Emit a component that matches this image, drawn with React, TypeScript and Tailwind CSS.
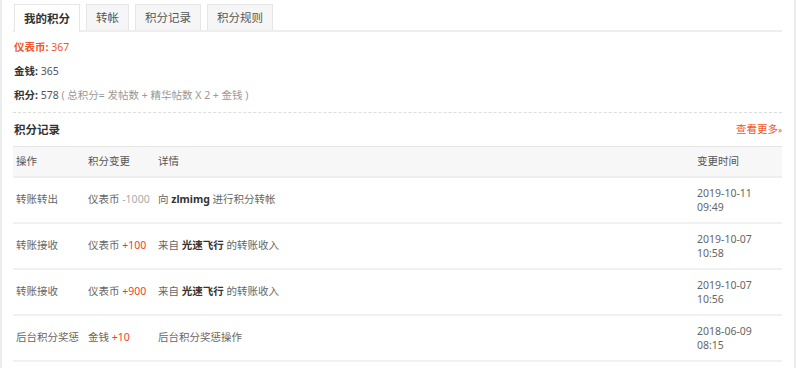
import React from "react";

type Row = {
  action: string;
  unit: string;
  amount: string;
  positive: boolean;
  detail: React.ReactNode;
  date: string;
  time: string;
};

const rows: Row[] = [
  {
    action: "转账转出",
    unit: "仪表币",
    amount: "-1000",
    positive: false,
    detail: (
      <>
        向 <b className="font-bold text-[#333]">zlmimg</b> 进行积分转帐
      </>
    ),
    date: "2019-10-11",
    time: "09:49",
  },
  {
    action: "转账接收",
    unit: "仪表币",
    amount: "+100",
    positive: true,
    detail: (
      <>
        来自 <b className="font-bold text-[#333]">光速飞行</b> 的转账收入
      </>
    ),
    date: "2019-10-07",
    time: "10:58",
  },
  {
    action: "转账接收",
    unit: "仪表币",
    amount: "+900",
    positive: true,
    detail: (
      <>
        来自 <b className="font-bold text-[#333]">光速飞行</b> 的转账收入
      </>
    ),
    date: "2019-10-07",
    time: "10:56",
  },
  {
    action: "后台积分奖惩",
    unit: "金钱",
    amount: "+10",
    positive: true,
    detail: "后台积分奖惩操作",
    date: "2018-06-09",
    time: "08:15",
  },
];

const tabs = ["我的积分", "转帐", "积分记录", "积分规则"];

export default function App() {
  return (
    <div className="h-[368px] w-[798px] overflow-hidden bg-white font-['Noto_Sans','Noto_Sans_CJK_SC',sans-serif] text-[10.5px] text-[#666]">
      <div className="h-full w-[796px] border-l-2 border-r-2 border-[#ececec] pl-[11px] pr-[12px]">
        {/* tabs */}
        <div className="flex h-[32px] items-end gap-[6px] border-b-2 border-[#eeeeee] pl-[1px] text-[11.5px]">
          {tabs.map((t, i) =>
            i === 0 ? (
              <div
                key={t}
                className="-mb-[2px] flex h-[28px] items-center whitespace-nowrap border border-b-0 border-[#e6e6e6] bg-white px-[9px] font-bold text-[#333]"
              >
                {t}
              </div>
            ) : (
              <div
                key={t}
                className="flex h-[26px] items-center whitespace-nowrap border border-b-0 border-[#e6e6e6] bg-[#f6f6f6] px-[9px] text-[#555]"
              >
                {t}
              </div>
            )
          )}
        </div>

        {/* summary */}
        <div className="border-b border-dashed border-[#dddddd] pb-[5px] pl-[1px] pt-[3px] leading-[24px]">
          <div className="text-[#f0562b]">
            <b className="font-bold">仪表币:</b> 367
          </div>
          <div className="text-[#555]">
            <b className="font-bold text-[#333]">金钱:</b> 365
          </div>
          <div className="text-[#555]">
            <b className="font-bold text-[#333]">积分:</b> 578{" "}
            <span className="text-[#999]">( 总积分= 发帖数 + 精华帖数 X 2 + 金钱 )</span>
          </div>
        </div>

        {/* title */}
        <div className="flex h-[33px] items-center justify-between pl-[1px]">
          <span className="text-[11.5px] font-bold text-[#333]">积分记录</span>
          <span className="text-[#f0562b]">
            查看更多<span className="text-[8px]">»</span>
          </span>
        </div>

        {/* table */}
        <div className="whitespace-nowrap border-t border-[#e6e6e6]">
          <div className="flex h-[31px] items-center border-b-2 border-[#eeeeee] bg-[#f7f7f7] text-[#555]">
            <div className="w-[72px] shrink-0 pl-[3px]">操作</div>
            <div className="w-[70px] shrink-0 pl-[3px]">积分变更</div>
            <div className="min-w-0 flex-1 pl-[3px]">详情</div>
            <div className="w-[88px] shrink-0 pl-[3px]">变更时间</div>
          </div>
          {rows.map((r, i) => (
            <div
              key={i}
              className="flex h-[46px] items-center border-b-2 border-[#f0f0f0] text-[#666]"
            >
              <div className="w-[72px] shrink-0 pl-[3px]">{r.action}</div>
              <div className="w-[70px] shrink-0 pl-[3px]">
                {r.unit}{" "}
                <span className={r.positive ? "text-[#f03c2a]" : "text-[#aaa]"}>{r.amount}</span>
              </div>
              <div className="min-w-0 flex-1 pl-[3px]">{r.detail}</div>
              <div className="flex w-[88px] shrink-0 flex-col pl-[3px] leading-[14.5px]">
                <span>{r.date}</span>
                <span>{r.time}</span>
              </div>
            </div>
          ))}
        </div>
      </div>
    </div>
  );
}
